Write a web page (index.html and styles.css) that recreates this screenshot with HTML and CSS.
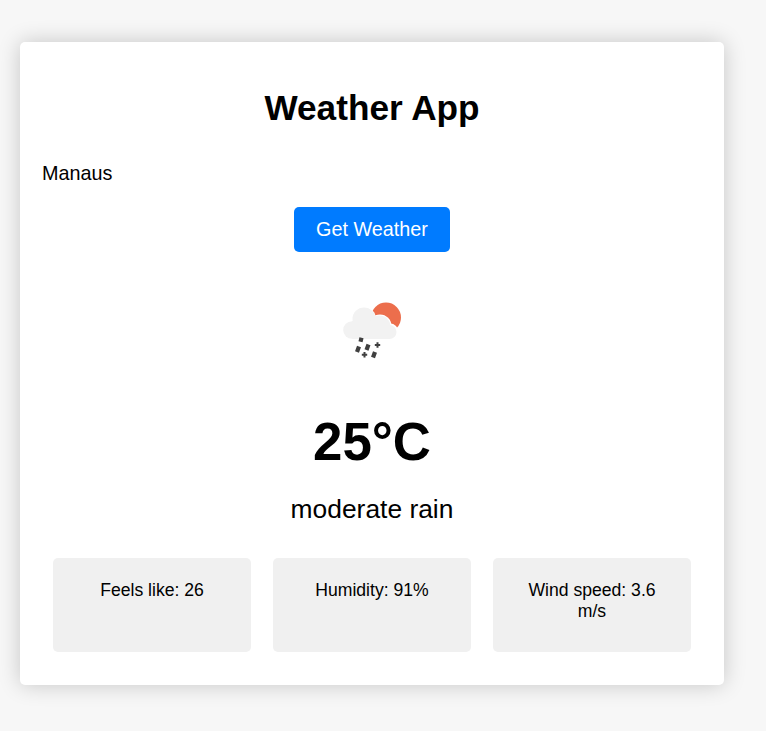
FILE: index.html
```html
<!DOCTYPE html>
<html lang="en">
<head>
<meta charset="utf-8">
<title>Weather App</title>
<link rel="stylesheet" href="styles.css">
</head>
<body>
<main class="container">
  <h1 class="title">Weather App</h1>
  <div class="city">Manaus</div>
  <button class="get-weather" type="button">Get Weather</button>
  <svg class="icon" viewBox="-13 -16 110 110" aria-hidden="true">
    <circle cx="56" cy="27.500" r="15" fill="#ec6e4c"/>
    <g fill="#fff">
      <circle cx="34" cy="29" r="12"/><circle cx="50" cy="36" r="11.500"/><circle cx="60" cy="42" r="8.500"/>
    </g>
    <g fill="#f2f2f2">
      <circle cx="34" cy="29" r="11.500"/><circle cx="22" cy="40" r="8.800"/><circle cx="49.500" cy="36.500" r="11"/><circle cx="59.500" cy="42" r="7"/><path d="M22 31h32l5 18H22z"/>
    </g>
    <g class="drops">
      <path d="M31.500 47.800l-1 4M29 56.500l-2 5.500M38.500 54.500l-2 5.500M45 62l-2 5.500"/>
      <path class="splash" d="M47.500 52.300v5.400M44.800 55h5.400M34.500 62v5.400M31.800 64.700h5.400"/>
    </g>
  </svg>
  <div class="temp">25°C</div>
  <div class="description">moderate rain</div>
  <div class="details">
    <div class="detail">Feels like: 26</div>
    <div class="detail">Humidity: 91%</div>
    <div class="detail">Wind speed: 3.6 m/s</div>
  </div>
</main>
</body>
</html>
```
FILE: styles.css
```css
* { box-sizing: border-box; }
body {
  margin: 0;
  min-height: 100vh;
  padding: 42px 0 0 20px;
  background: #f7f7f7;
  font-family: "Liberation Sans", Arial, sans-serif;
  color: #000;
}
.container {
  width: 704px;
  height: 643px;
  padding: 45px 22px 0;
  display: flex;
  flex-direction: column;
  align-items: center;
  background: #fff;
  border-radius: 5px;
  box-shadow: 0 0 22px rgba(0, 0, 0, .2);
}
.title { margin: 0; font-size: 35.2px; line-height: 42px; }
.city { align-self: stretch; margin-top: 32px; font-size: 19.8px; line-height: 24px; }
.get-weather {
  width: 156px;
  height: 45px;
  margin-top: 22px;
  padding: 0;
  border: 0;
  border-radius: 5px;
  background: #007bff;
  color: #fff;
  font: 19.8px "Liberation Sans", Arial, sans-serif;
}
.icon { width: 110px; height: 110px; margin-top: 22px; filter: blur(.6px); }
.drops { fill: none; stroke: #404040; stroke-width: 4.2; }
.splash { stroke-width: 2; }
.temp { margin-top: 28px; font-size: 52.8px; font-weight: bold; line-height: 60px; }
.description { margin-top: 21px; font-size: 26.4px; line-height: 32px; }
.details { display: flex; gap: 22px; margin-top: 33px; }
.detail {
  width: 198px;
  height: 94px;
  padding: 22px;
  background: #f0f0f0;
  border-radius: 5px;
  text-align: center;
  font-size: 17.6px;
  line-height: 21px;
}
```
